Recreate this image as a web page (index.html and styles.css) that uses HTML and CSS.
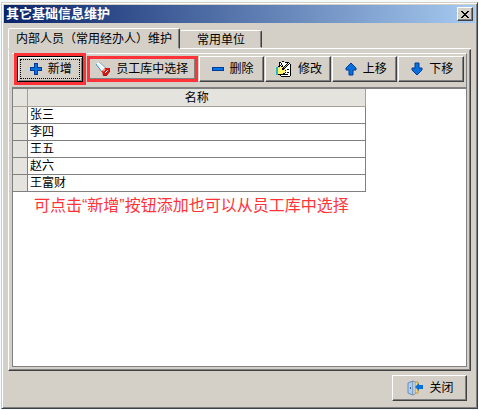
FILE: index.html
```
<!DOCTYPE html>
<html lang="zh-CN">
<head>
    <meta charset="UTF-8">
    <meta name="viewport" content="width=device-width, initial-scale=1.0">
    <title>其它基础信息维护</title>
    <link rel="stylesheet" href="styles.css">
</head>
<body>
    <div class="window">
        <header class="title-bar">
            <h1>其它基础信息维护</h1>
            <button type="button" class="close-btn" aria-label="关闭窗口">
                <svg width="8" height="7" viewBox="0 0 8 7" shape-rendering="crispEdges">
                    <path d="M0 0h2v1h1v1h2V1h1V0h2v1H7v1H6v1H5v1h1v1h1v1h1v1H6V6H5V5H3v1H2v1H0V6h1V5h1V4h1V3H2V2H1V1H0z" fill="#000"/>
                </svg>
            </button>
        </header>

        <div class="tabs" role="tablist">
            <button type="button" class="tab active" role="tab" aria-selected="true">内部人员（常用经办人）维护</button>
            <button type="button" class="tab" role="tab" aria-selected="false">常用单位</button>
        </div>

        <main class="panel">
            <div class="toolbar">
                <button type="button" class="btn add">
                    <svg width="12" height="12" viewBox="0 0 12 12" shape-rendering="crispEdges">
                        <path d="M4 0h4v4h4v4H8v4H4V8H0V4h4z" fill="#003a9b"/>
                        <path d="M5 1h2v4h4v2H7v4H5V7H1V5h4z" fill="#0874df"/>
                    </svg>
                    新增
                </button>
                <button type="button" class="btn pick">
                    <svg width="14" height="14" viewBox="0 0 14 14">
                        <path d="M0 2l3-2 6 6-3 4z" fill="#fff"/>
                        <path d="M0 2l6 8" stroke="#3489ce" stroke-width="1"/>
                        <path d="M3 0l7 6" stroke="#78aed6" stroke-width="1"/>
                        <path d="M2 2l6 6" stroke="#d9effc" stroke-width="1"/>
                        <path d="M6 9l3-3h5v3l-4 5H7z" fill="#cf1710"/>
                        <path d="M7 9l2-2" stroke="#ff9c88" stroke-width="2"/>
                        <path d="M9 11l3-3" stroke="#fff" stroke-width="1"/>
                        <path d="M8 14h2l4-5" fill="none" stroke="#8f1010"/>
                    </svg>
                    员工库中选择
                </button>
                <button type="button" class="btn">
                    <svg width="12" height="4" viewBox="0 0 12 4" shape-rendering="crispEdges">
                        <path d="M0 0h12v4H0z" fill="#003a9b"/>
                        <path d="M1 1h10v2H1z" fill="#0874df"/>
                    </svg>
                    删除
                </button>
                <button type="button" class="btn">
                    <svg width="16" height="16" viewBox="0 0 16 16" shape-rendering="crispEdges">
                        <path d="M4 1h9v2h2v12H4z" fill="#fff"/>
                        <path d="M3 1h2v1H3zM6 0h2v1H6zM9 1h4v1H9zM13 2h1v1h-1zM14 3h1v12h-1zM5 15h9v1H5zM3 2h1v3H3zM4 13h1v2H4zM11 8h2v1h-2zM11 11h2v1h-2zM7 13h5v1H7z" fill="#000"/>
                        <path d="M0 6h2v8H0z" fill="#24b8c0"/>
                        <path d="M2 7h2V6h3v2h3v4H8v1H2z" fill="#fff266"/>
                        <path d="M2 5h2v1H2zM4 4h1v1H4zM5 5h1v1H5zM9 9h1v1H9zM9 11h1v1H9zM7 12h2v1H7zM2 13h5v1H2z" fill="#000"/>
                        <path d="M11 2h1v1h1v1h-1v1h-1v1h-1v1H9v1H8v1H6V7h1V6h1V5h1V4h1V3h1z" fill="#000"/>
                        <path d="M11 3h1v1h-1zM10 4h1v1h-1zM9 5h1v1H9zM8 6h1v1H8z" fill="#b8b28a"/>
                        <path d="M5 2h1v2H5zM6 4h1v2H6z" fill="#000"/>
                    </svg>
                    修改
                </button>
                <button type="button" class="btn">
                    <svg width="12" height="14" viewBox="0 0 12 14">
                        <path d="M6 1l5 5v2H8v5H4V8H1V6z" fill="#0870d8" stroke="#003a9b"/>
                    </svg>
                    上移
                </button>
                <button type="button" class="btn">
                    <svg width="12" height="14" viewBox="0 0 12 14">
                        <path d="M6 13l5-5V6H8V1H4v5H1v2z" fill="#0870d8" stroke="#003a9b"/>
                    </svg>
                    下移
                </button>
            </div>

            <div class="grid">
                <table>
                    <thead>
                        <tr><th class="mark"></th><th>名称</th></tr>
                    </thead>
                    <tbody>
                        <tr><td class="mark"></td><td>张三</td></tr>
                        <tr><td class="mark"></td><td>李四</td></tr>
                        <tr><td class="mark"></td><td>王五</td></tr>
                        <tr><td class="mark"></td><td>赵六</td></tr>
                        <tr><td class="mark"></td><td>王富财</td></tr>
                    </tbody>
                </table>
                <p class="note">可点击“新增”按钮添加也可以从员工库中选择</p>
            </div>
        </main>

        <footer class="footer">
            <button type="button" class="btn">
                <svg width="16" height="16" viewBox="0 0 16 16">
                    <path d="M7 2h4v11H7z" fill="#f7d779" stroke="#c69a35"/>
                    <path d="M1 3l5-2v14l-5-2z" fill="#a9cff3" stroke="#6689ba"/>
                    <path d="M6 1l2 1v12l-2 1z" fill="#fff" stroke="#7d90ad" stroke-width="1"/>
                    <path d="M3 7h1v2H3z" fill="#315d99"/>
                    <path d="M8 7l4-4v2h4v4h-4v2z" fill="#0870d8"/>
                </svg>
                关闭
            </button>
        </footer>
    </div>
</body>
</html>
```

FILE: styles.css
```
* {
    margin: 0;
    padding: 0;
    box-sizing: border-box;
}

body {
    font-family: "Liberation Sans", "Noto Sans CJK SC", sans-serif;
    font-size: 12px;
    line-height: 16px;
    color: #000;
    background: #f5faff;
    min-height: 100vh;
    display: flex;
    padding: 2px 1px 1px;
}

button {
    font: inherit;
    color: inherit;
    background: #d4d0c8;
}

svg {
    flex: none;
}

.window {
    flex: 1;
    display: flex;
    flex-direction: column;
    background: #d4d0c8;
    border: 1px solid;
    border-color: #d4d0c8 #404040 #404040 #c3ced4;
    box-shadow: inset 1px 1px #fff, inset -1px -1px #808080;
    padding: 2px;
}

.title-bar {
    display: flex;
    align-items: center;
    justify-content: space-between;
    height: 18px;
    padding: 0 2px;
    background: linear-gradient(to right, #0a246a, #a6caf0);
}

.title-bar h1 {
    font-size: 13px;
    line-height: 18px;
    color: #fff;
}

.close-btn {
    display: flex;
    align-items: center;
    justify-content: center;
    width: 16px;
    height: 14px;
    border: 1px solid;
    border-color: #fff #404040 #404040 #fff;
    box-shadow: inset -1px -1px #808080;
}

.tabs {
    display: flex;
    align-items: flex-end;
    margin: 5px 4px 0;
    background: linear-gradient(#fff, #fff) right bottom / calc(100% - 172px) 1px no-repeat;
}

.tab {
    height: 18px;
    padding: 1px 16px 0;
    border: 1px solid;
    border-color: #fff #404040 transparent transparent;
    border-radius: 2px 2px 0 0;
    box-shadow: inset -1px 0 #808080;
    margin-bottom: 1px;
}

.tab.active {
    height: 21px;
    padding: 0 7px;
    border-color: #fff #404040 transparent #fff;
    margin-bottom: 0;
}

.panel {
    flex: 1;
    display: flex;
    flex-direction: column;
    margin: 0 4px;
    padding: 3px;
    border: 1px solid;
    border-color: transparent #404040 #404040 #fff;
    box-shadow: inset -1px -1px #808080;
}

.toolbar {
    display: flex;
    gap: 1px;
    padding: 2px 2px 5px 5px;
    border-top: 1px solid #fff;
    border-right: 1px solid #808080;
}

.btn {
    display: flex;
    align-items: center;
    justify-content: center;
    gap: 6px;
    height: 26px;
    padding-left: 2px;
    border: 1px solid;
    border-color: #fff #404040 #404040 #fff;
    box-shadow: inset -1px -1px #808080;
    white-space: nowrap;
}

.toolbar .btn {
    flex: 1 1 66px;
}

/* the two highlighted ways to add a person */
.toolbar .add {
    position: relative;
    border: 1px solid #000;
    box-shadow: inset 1px 1px #fff, inset -1px -1px #808080;
    outline: 3px solid #ff3338;
    margin-right: 3px;
}

.add::after {
    content: "";
    position: absolute;
    inset: 2px;
    border: 1px dotted #000;
}

.toolbar .pick {
    flex: 1 1 112px;
    padding-left: 0;
    border: 3px solid #ff3338;
    box-shadow: inset -1px -1px #808080;
}

.grid {
    flex: 1;
    background: #fff;
    border: 1px solid #808080;
    border-top-width: 2px;
}

table {
    width: 78%;
    border-collapse: separate;
    border-spacing: 0;
    table-layout: fixed;
}

th,
td {
    height: 17px;
    line-height: 16px;
    padding: 0 2px;
    border-right: 1px solid #808080;
    border-bottom: 1px solid #808080;
}

th {
    height: 18px;
    font-weight: normal;
    background: #e4e3de;
    border-color: #a5a294;
}

.mark {
    width: 15px;
    padding: 0;
    background: #e4e3de;
}

.note {
    padding: 4px 21px;
    font-size: 16px;
    line-height: 20px;
    color: #ff3338;
}

.footer {
    display: flex;
    justify-content: flex-end;
    padding: 4px 8px 5px;
}

.footer .btn {
    width: 75px;
}
```
